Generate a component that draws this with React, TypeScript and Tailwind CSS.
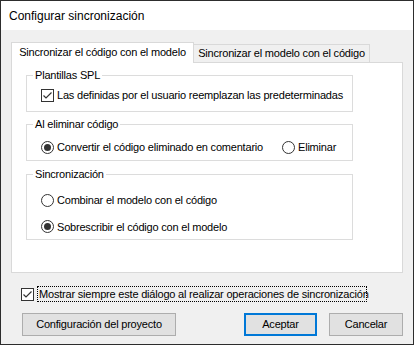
import type { ReactNode } from 'react';

function CheckBox(): JSX.Element {
    return (
        <svg width="13" height="13" viewBox="0 0 13 13" className="shrink-0">
            <rect x="0.5" y="0.5" width="12" height="12" fill="#fff" stroke="#333" />
            <polyline points="2.5,6.5 5,9 10.5,3.5" fill="none" stroke="#333" strokeWidth="1.2" />
        </svg>
    );
}

function Radio({ checked }: { checked?: boolean }): JSX.Element {
    return (
        <svg width="13" height="13" viewBox="0 0 13 13" className="shrink-0">
            <circle cx="6.5" cy="6.5" r="6" fill="#fff" stroke="#333" />
            {checked && <circle cx="6.5" cy="6.5" r="3.5" fill="#333" />}
        </svg>
    );
}

function GroupBox({ title, className, children }: { title: string; className: string; children: ReactNode }): JSX.Element {
    return (
        <div className={`relative w-[327px] border border-[#dcdcdc] ${className}`}>
            <span className="absolute left-[6px] top-[-8px] bg-white px-[2px] leading-[14px]">{title}</span>
            {children}
        </div>
    );
}

export default function App(): JSX.Element {
    return (
        <div className="flex h-[345px] w-[414px] flex-col whitespace-nowrap border border-[#2d2d2d] bg-[#f0f0f0] font-['Liberation_Sans',Arial,sans-serif] text-[11px] tracking-[-0.2px] text-black">
            <div className="flex h-[29px] items-center bg-white pl-[8px] text-[12px] tracking-normal">Configurar sincronización</div>
            <div className="flex-1 px-[10px] pt-[12px]">
                <div className="flex h-[20px] items-end">
                    <div className="relative z-10 -mb-px flex h-[21px] w-[183px] items-center justify-center border border-b-0 border-[#d9d9d9] bg-white pb-[2px]">
                        Sincronizar el código con el modelo
                    </div>
                    <div className="flex h-[18px] w-[176px] items-center justify-center border-t border-r border-[#d9d9d9]">
                        Sincronizar el modelo con el código
                    </div>
                </div>
                <div className="h-[211px] w-[392px] border border-[#d9d9d9] bg-white pl-[14px] pt-[12px]">
                    <GroupBox title="Plantillas SPL" className="h-[37px]">
                        <div className="flex items-center gap-[3px] pl-[14px] pt-[11px]">
                            <CheckBox />
                            <span>Las definidas por el usuario reemplazan las predeterminadas</span>
                        </div>
                    </GroupBox>
                    <GroupBox title="Al eliminar código" className="mt-[12px] h-[37px]">
                        <div className="flex items-center pl-[14px] pt-[14px]">
                            <div className="flex w-[241px] items-center gap-[3px]">
                                <Radio checked />
                                <span>Convertir el código eliminado en comentario</span>
                            </div>
                            <div className="flex items-center gap-[3px]">
                                <Radio />
                                <span>Eliminar</span>
                            </div>
                        </div>
                    </GroupBox>
                    <GroupBox title="Sincronización" className="mt-[13px] h-[66px]">
                        <div className="flex flex-col gap-[10px] pl-[14px] pt-[17px]">
                            <div className="flex items-center gap-[3px]">
                                <Radio />
                                <span>Combinar el modelo con el código</span>
                            </div>
                            <div className="flex items-center gap-[3px]">
                                <Radio checked />
                                <span>Sobrescribir el código con el modelo</span>
                            </div>
                        </div>
                    </GroupBox>
                </div>
                <div className="ml-[10px] mt-[13px] flex items-center gap-[3px]">
                    <CheckBox />
                    <span className="flex h-[16px] w-[330px] items-center border border-dotted border-black pl-px">
                        Mostrar siempre este diálogo al realizar operaciones de sincronización
                    </span>
                </div>
                <div className="mt-[11px] flex w-[392px] items-center pl-[11px]">
                    <button className="h-[23px] w-[154px] border border-[#adadad] bg-[#e1e1e1]">Configuración del proyecto</button>
                    <button className="ml-auto h-[23px] w-[73px] border-2 border-[#0078d7] bg-[#e1e1e1]">Aceptar</button>
                    <button className="ml-[12px] h-[23px] w-[74px] border border-[#adadad] bg-[#e1e1e1]">Cancelar</button>
                </div>
            </div>
        </div>
    );
}
